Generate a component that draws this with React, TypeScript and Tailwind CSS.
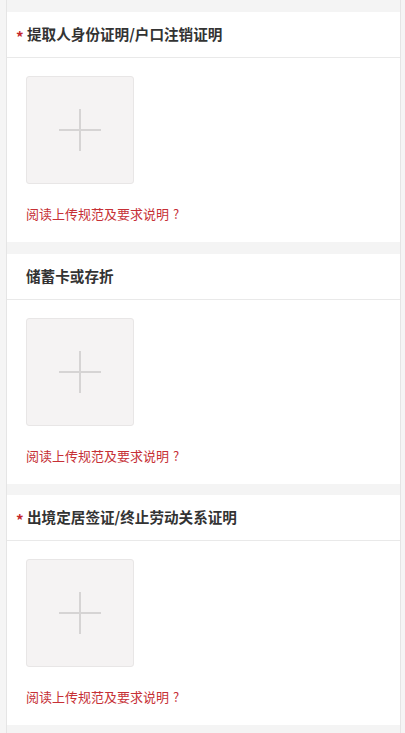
import React from "react";

type Item = { title: string; required: boolean };

const items: Item[] = [
  { title: "提取人身份证明/户口注销证明", required: true },
  { title: "储蓄卡或存折", required: false },
  { title: "出境定居签证/终止劳动关系证明", required: true },
];

function Card({ item }: { item: Item }) {
  return (
    <div className="bg-white">
      <div className="h-[46px] flex items-center pl-[9px] border-b border-[#e9e9e9]">
        {item.required ? (
          <span className="w-[11px] text-[#c4272d] text-[15px] font-bold leading-none relative top-[2px]">*</span>
        ) : (
          <span className="w-[10px]" />
        )}
        <span className="text-[14.6px] font-bold text-[#333333] leading-none">{item.title}</span>
      </div>
      <div className="pt-[18px] pb-[19px] pl-[19px]">
        <div className="w-[108px] h-[108px] rounded-[3px] border border-[#e8e6e6] bg-[#f5f3f3] flex items-center justify-center">
          <svg width="42" height="42" viewBox="0 0 42 42">
            <path d="M21 0V42M0 21H42" stroke="#d6d4d4" strokeWidth="2" fill="none" />
          </svg>
        </div>
        <div className="mt-[21px] text-[13px] leading-[18px] text-[#c63036]">
          阅读上传规范及要求说明<span className="ml-[4px]">?</span>
        </div>
      </div>
    </div>
  );
}

export default function App() {
  return (
    <div
      className="min-h-[733px] bg-[#f5f5f5]"
      style={{ fontFamily: '"Noto Sans CJK SC", "Noto Sans", sans-serif' }}
    >
      <div className="ml-[6px] w-[395px] min-h-[733px] border-x border-[#e5e5e5] bg-[#f4f4f4] pt-[12px] flex flex-col gap-[11.5px]">
        {items.map((it) => (
          <Card key={it.title} item={it} />
        ))}
      </div>
    </div>
  );
}
